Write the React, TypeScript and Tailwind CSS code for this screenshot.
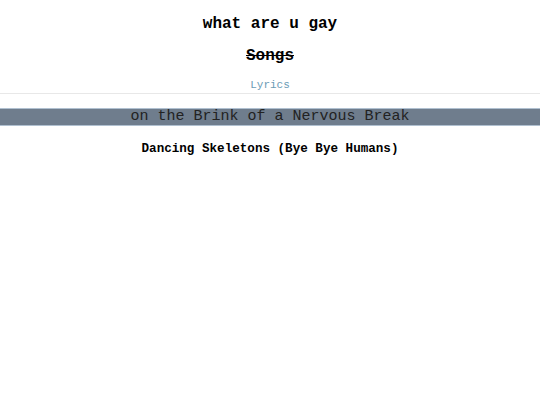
import React from "react";

const mono = { fontFamily: '"Liberation Mono", "Courier New", monospace' };

const App = () => {
  return (
    <div className="min-h-[405px] w-full bg-white text-black" style={mono}>
      <div className="flex flex-col items-center">
        <h1 className="mt-[14px] text-[16px] font-bold leading-[20px]">what are u gay</h1>
        <p className="mt-[12px] text-[16px] font-bold leading-[20px] line-through">Songs</p>
        <p className="mt-[12px] text-[11px] leading-[14px] text-[#6b9bb5]">Lyrics</p>
      </div>
      <div className="mt-[1px] border-t border-[#e8e8e8]" />
      <div className="mt-[14px] border-y border-[#b0c0d0] bg-[#6f7d8d] text-center text-[15px] leading-[16px] text-[#222]">
        on the Brink of a Nervous Break
      </div>
      <p className="mt-[15px] text-center text-[12.6px] font-bold leading-[16px]">
        Dancing Skeletons (Bye Bye Humans)
      </p>
    </div>
  );
};

export default App;
